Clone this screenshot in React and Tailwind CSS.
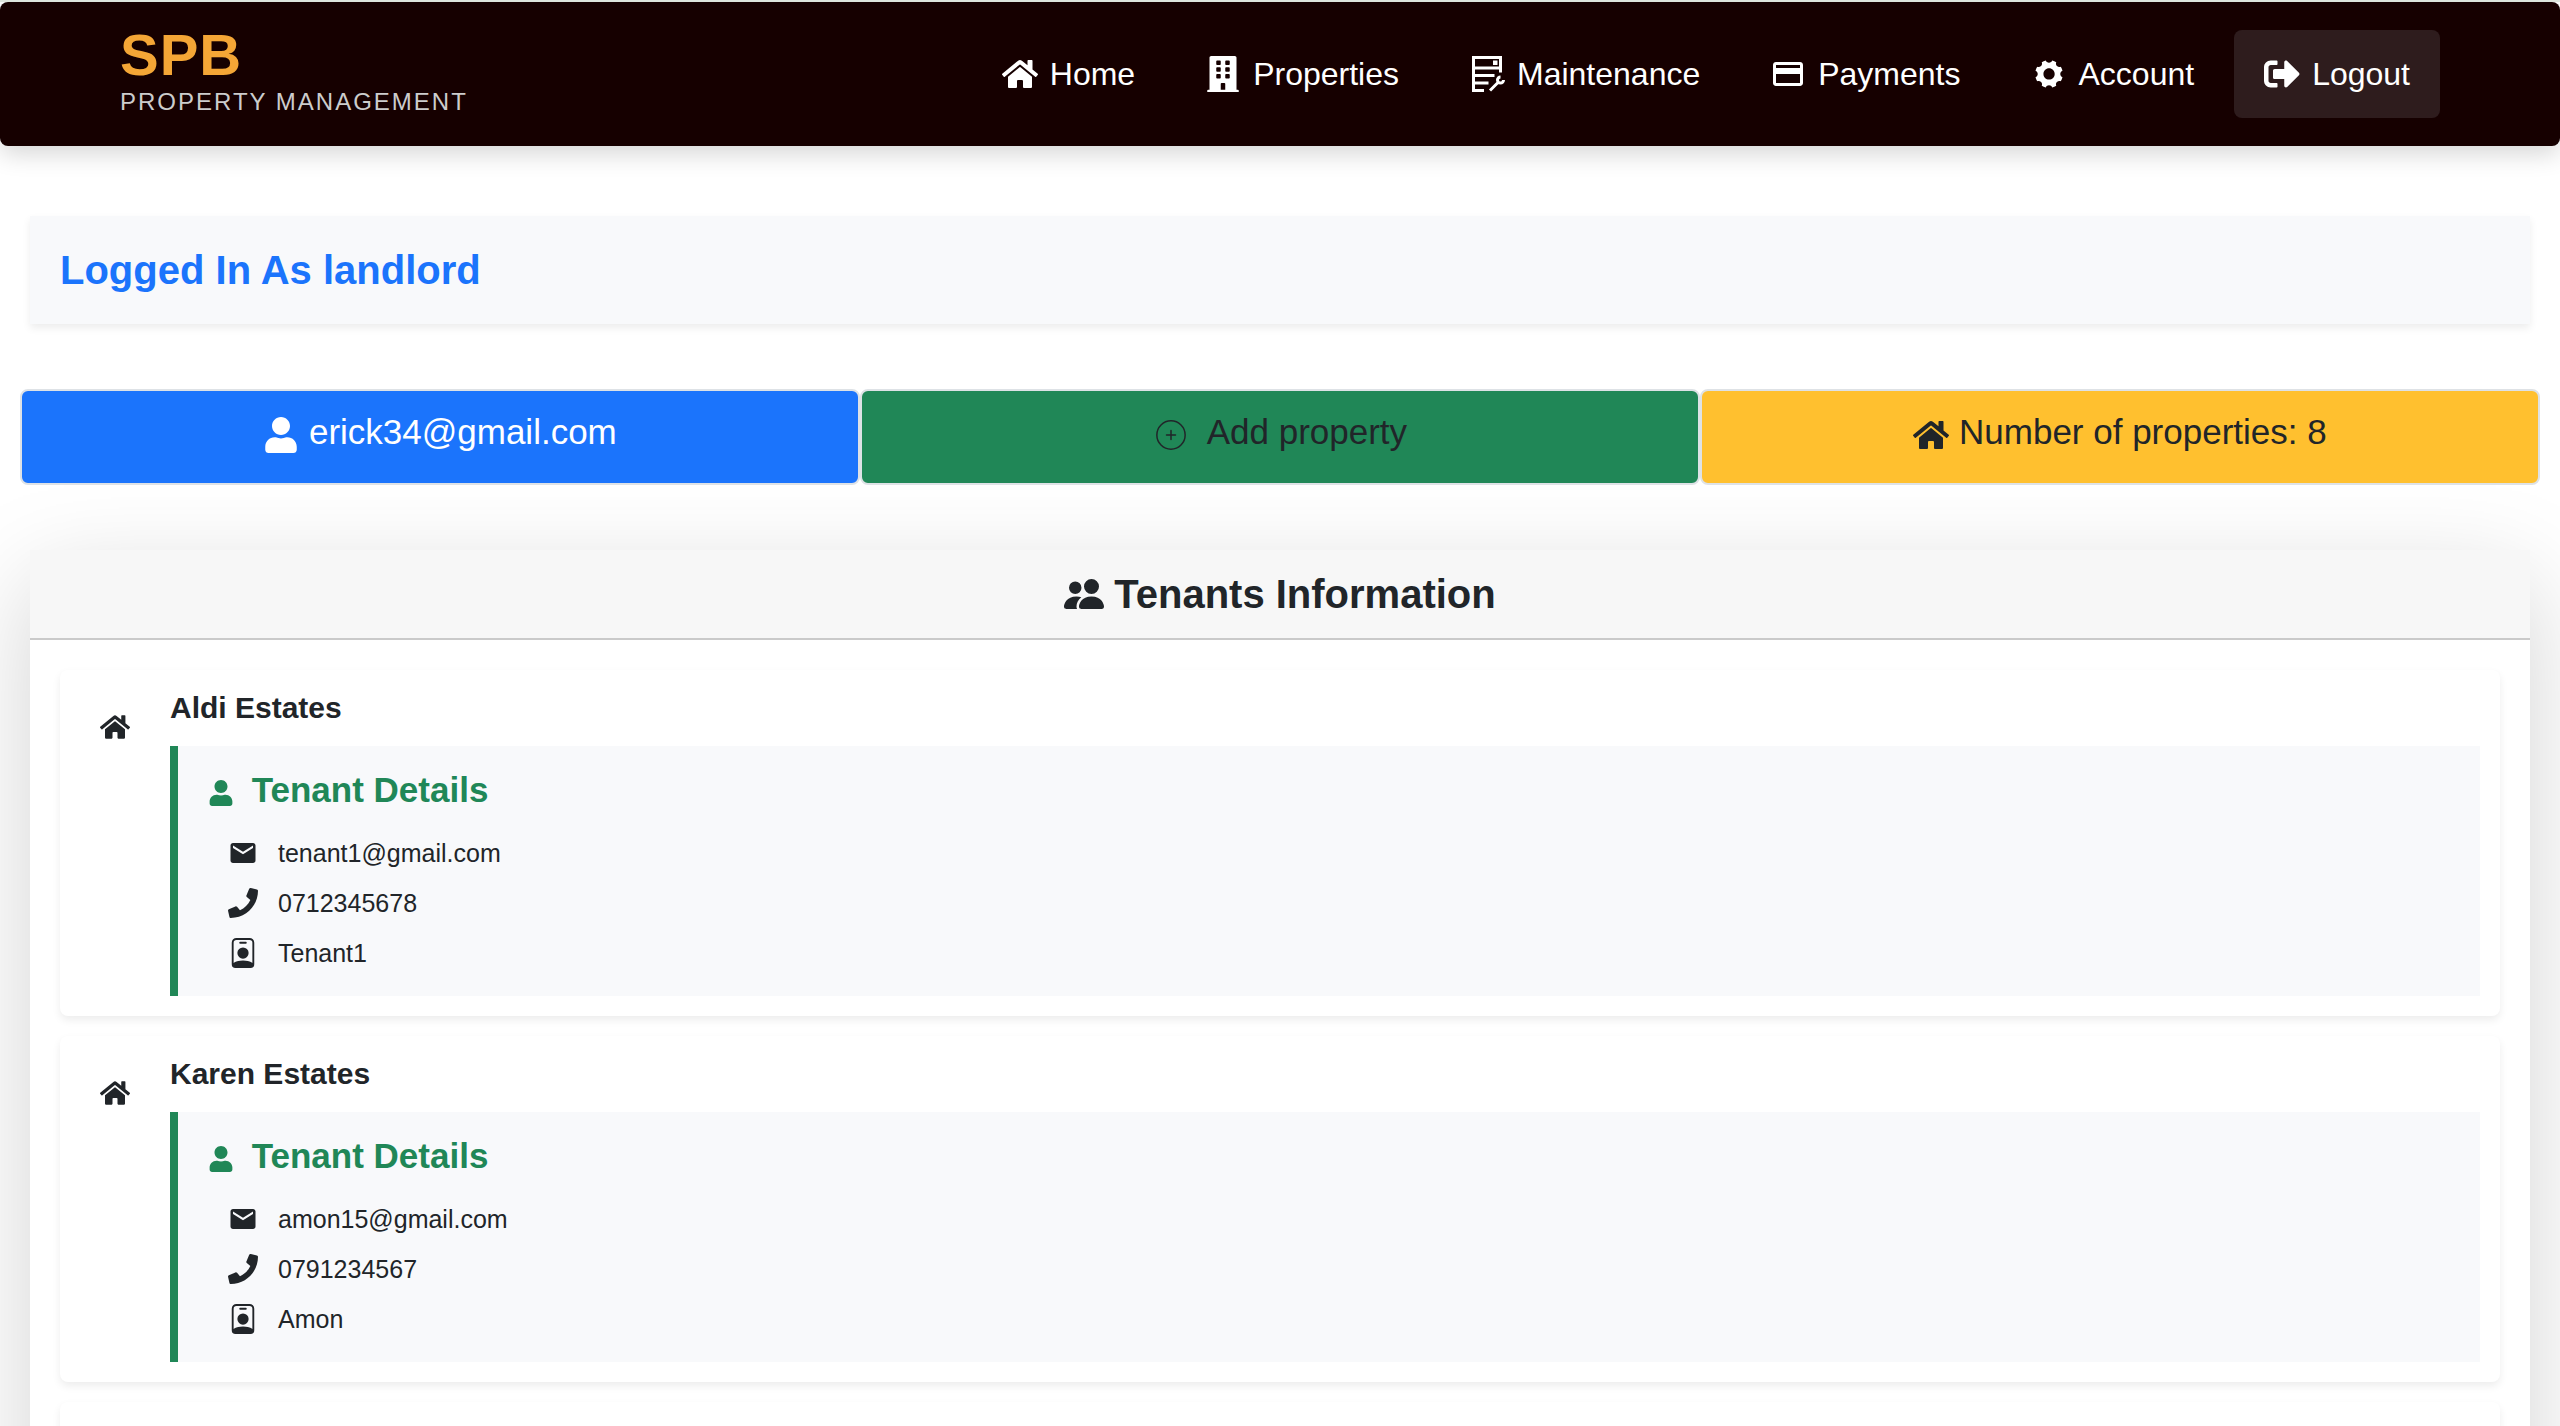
import { FaBuilding, FaHome, FaPhone, FaSignOutAlt, FaUser } from 'react-icons/fa';
import { BsPeopleFill, BsPersonBadge } from 'react-icons/bs';
import { IoIosSettings } from 'react-icons/io';
import { MdEmail, MdPayment } from 'react-icons/md';
import { GrHostMaintenance } from 'react-icons/gr';
import { CiCirclePlus } from 'react-icons/ci';

const links = [
  { label: 'Home', Icon: FaHome },
  { label: 'Properties', Icon: FaBuilding },
  { label: 'Maintenance', Icon: GrHostMaintenance },
  { label: 'Payments', Icon: MdPayment },
  { label: 'Account', Icon: IoIosSettings },
];

const properties = [
  { name: 'Aldi Estates', email: 'tenant1@gmail.com', phone: '0712345678', tenant: 'Tenant1' },
  { name: 'Karen Estates', email: 'amon15@gmail.com', phone: '0791234567', tenant: 'Amon' },
];

function Navbar() {
  return (
    <header className="flex items-center justify-between rounded-lg bg-[#160000] px-[120px] py-[25px] shadow-[0_8px_24px_rgba(0,0,0,0.16)]">
      <a href="#" className="block">
        <span className="block text-[58px] leading-[56px] font-bold tracking-[1px] text-[#f4a636]">SPB</span>
        <span className="block text-[24px] leading-[38px] tracking-[2px] text-[#cccccc]">PROPERTY MANAGEMENT</span>
      </a>
      <nav className="flex items-center gap-2.5 text-[32px] leading-[48px] text-white">
        {links.map(({ label, Icon }) => (
          <a key={label} href="#" className="flex items-center gap-3 px-[30px] py-5">
            <Icon size={36} />
            {label}
          </a>
        ))}
        <button type="button" className="flex items-center gap-3 rounded-lg bg-[#2e1c1d] px-[30px] py-5">
          <FaSignOutAlt size={36} />
          Logout
        </button>
      </nav>
    </header>
  );
}

function Summary() {
  const card = 'rounded-lg border-2 border-[#dee2e6] px-5 pt-5 pb-[30px] text-center text-[35px] leading-[42px]';
  return (
    <section className="mx-5 mt-[65px] grid grid-cols-3">
      <div className={`${card} bg-[#1b74fc] text-white`}>
        <FaUser size={36} className="inline-block align-middle" /> erick34@gmail.com
      </div>
      <button type="button" className={`${card} bg-[#208757]`}>
        <CiCirclePlus size={36} className="mr-2.5 inline-block align-middle" /> Add property
      </button>
      <div className={`${card} bg-[#ffc02f]`}>
        <FaHome size={36} className="inline-block align-middle" /> Number of properties: 8
      </div>
    </section>
  );
}

function Property({ name, email, phone, tenant }) {
  const rows = [
    { Icon: MdEmail, text: email },
    { Icon: FaPhone, text: phone },
    { Icon: BsPersonBadge, text: tenant },
  ];
  return (
    <article className="flex rounded-lg bg-white pr-5 pb-5 shadow-[0_4px_8px_rgba(0,0,0,0.075)]">
      <div className="px-10 pt-[42px]">
        <FaHome size={30} />
      </div>
      <div className="flex-1 pt-5">
        <h3 className="mb-5 text-[30px] leading-9 font-bold">{name}</h3>
        <div className="border-l-8 border-[#208757] bg-[#f8f9fb] px-5 pt-5 pb-[18px]">
          <h4 className="text-[35px] leading-[48px] font-bold text-[#208757]">
            <FaUser size={26} className="mr-2 ml-2.5 inline-block align-middle" /> Tenant Details
          </h4>
          <ul className="mt-3.5 pl-[30px] text-[25px] leading-[50px]">
            {rows.map(({ Icon, text }) => (
              <li key={text} className="flex items-center gap-5">
                <Icon size={30} />
                {text}
              </li>
            ))}
          </ul>
        </div>
      </div>
    </article>
  );
}

export default function App() {
  return (
    <div className="h-screen overflow-hidden border-t-2 border-[#dde5dd] bg-white font-['Liberation_Sans',Arial,sans-serif] text-[#212529]">
      <Navbar />
      <main>
        <h1 className="mx-[30px] mt-[70px] bg-[#f8f9fb] p-[30px] text-[40px] leading-[48px] font-bold text-[#1b74fc] shadow-[0_4px_8px_rgba(0,0,0,0.075)]">
          Logged In As landlord
        </h1>
        <Summary />
        <section className="mx-[30px] mt-[65px] bg-white shadow-[0_32px_96px_rgba(0,0,0,0.175)]">
          <h2 className="flex items-center justify-center gap-2.5 border-b-2 border-[#cacaca] bg-[#f7f7f7] py-5 text-[40px] leading-[48px] font-bold">
            <BsPeopleFill size={40} />
            Tenants Information
          </h2>
          <div className="flex flex-col gap-5 p-[30px]">
            {properties.map((property) => (
              <Property key={property.name} {...property} />
            ))}
            <article className="h-[346px] rounded-lg bg-white shadow-[0_4px_8px_rgba(0,0,0,0.075)]" />
          </div>
        </section>
      </main>
    </div>
  );
}
